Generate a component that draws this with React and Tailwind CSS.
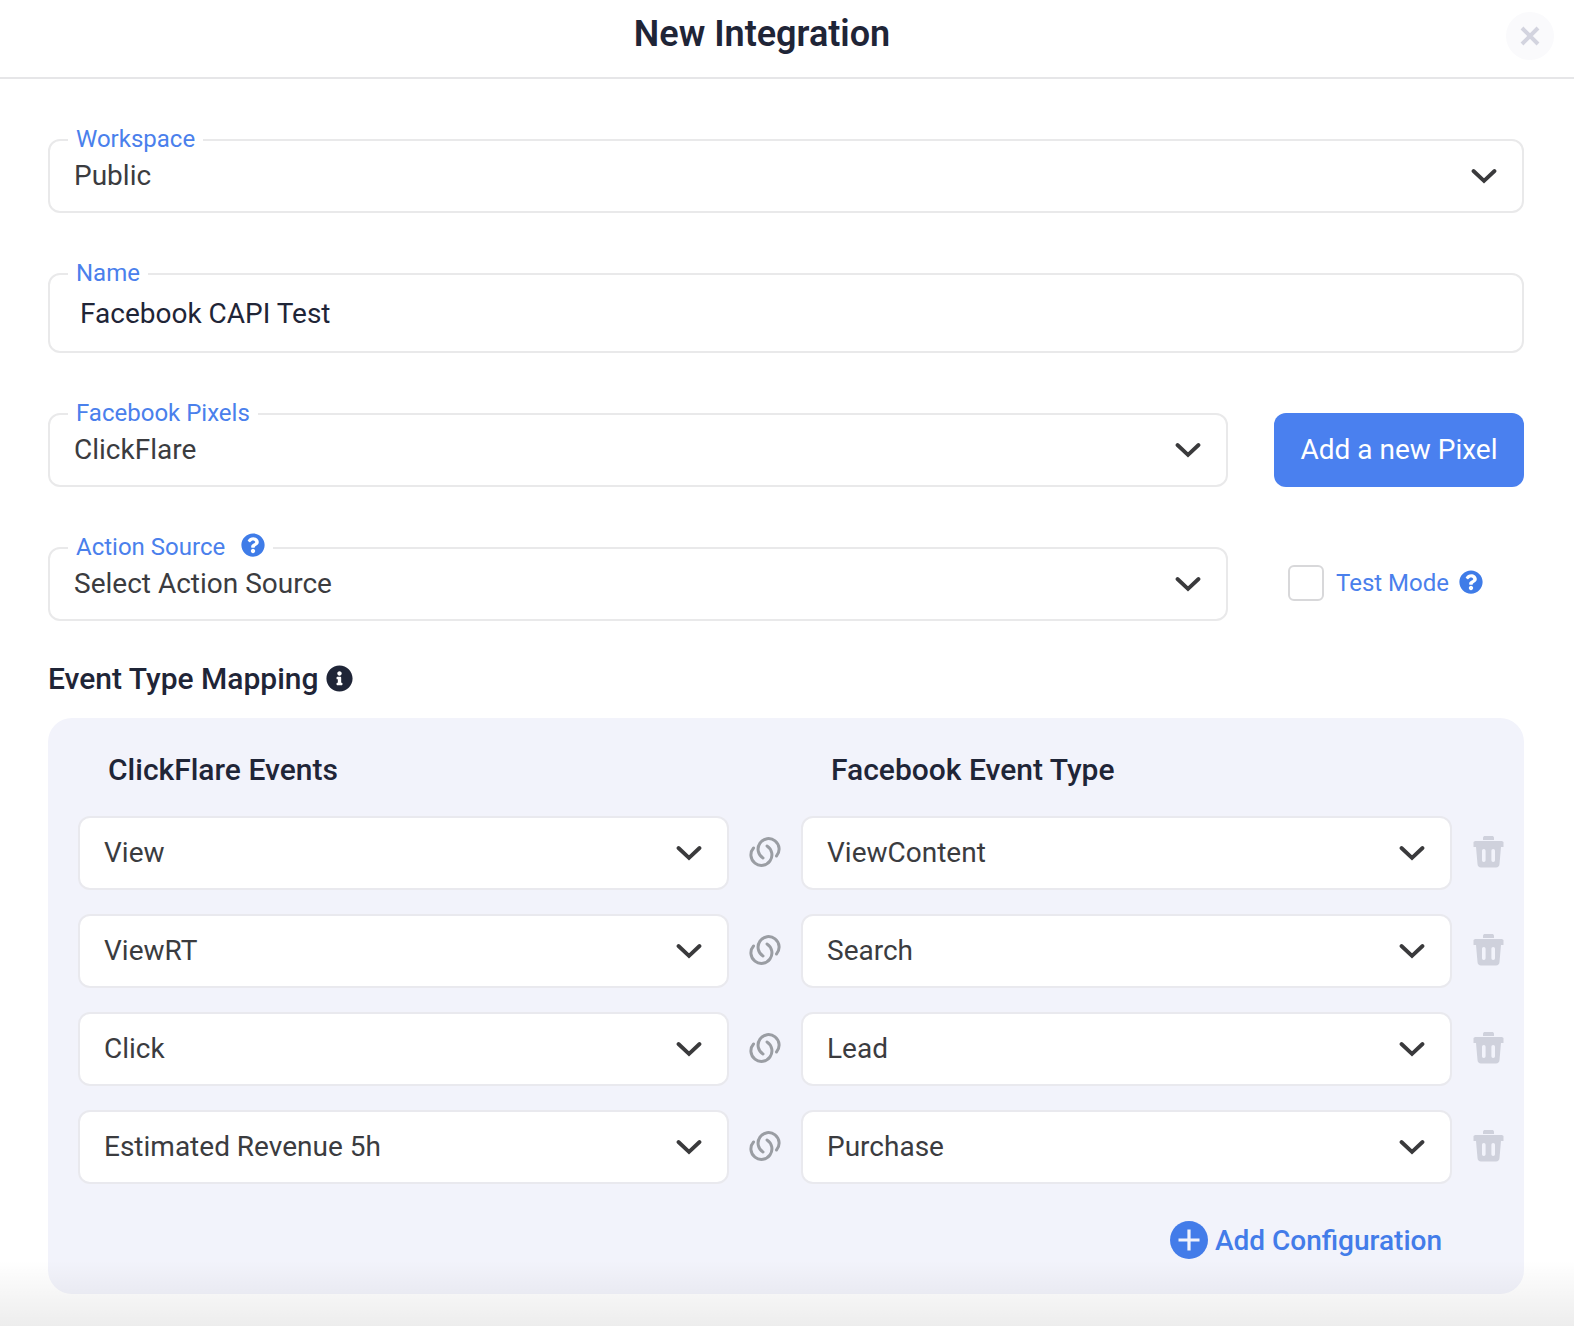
import React from "react";
import { FaInfoCircle, FaQuestionCircle } from "react-icons/fa";

const Chevron = () => (
  <svg width="26" height="16" viewBox="0 0 26 16" fill="none" className="shrink-0">
    <path d="M2.500 3 L13 13 L23.500 3" stroke="#3a3a3c" strokeWidth="3.800" strokeLinecap="round" strokeLinejoin="miter" />
  </svg>
);

const LinkRings = () => (
  <svg width="34" height="34" viewBox="0 0 34 34" fill="none">
    <path d="M15 23 A10.500 10.500 0 1 1 28.500 21" stroke="#9a9da3" strokeWidth="3" strokeLinecap="round" />
    <path d="M19 11 A10.500 10.500 0 1 1 5.500 13" stroke="#9a9da3" strokeWidth="3" strokeLinecap="round" />
  </svg>
);

const Trash = () => (
  <svg width="31" height="33" viewBox="0 0 31 33" fill="none">
    <path d="M10 5 V3 C10 1.500 11 1 12 1 H19 C20 1 21 1.500 21 3 V5 Z" fill="#cfd1dc" />
    <path d="M0.500 7 L2 6 H29 L30.500 7 V12 H0.500 Z" fill="#cfd1dc" />
    <path
      fillRule="evenodd"
      clipRule="evenodd"
      d="M3 12 H28 L26.500 29 C26.400 31 25 32.500 23 32.500 H8 C6 32.500 4.600 31 4.500 29 Z M10.800 14 C9.600 14 9 14.800 9 16 V25 C9 26.300 9.600 27 10.800 27 C12 27 12.600 26.300 12.600 25 V16 C12.600 14.800 12 14 10.800 14 Z M20.200 14 C19 14 18.400 14.800 18.400 16 V25 C18.400 26.300 19 27 20.200 27 C21.400 27 22 26.300 22 25 V16 C22 14.800 21.400 14 20.200 14 Z"
      fill="#cfd1dc"
    />
  </svg>
);

const Field = ({ label, children, className = "", height = "h-[74px]" }) => (
  <div className={`relative rounded-[12px] border-2 border-[#e9e9ea] bg-white ${height} ${className}`}>
    <div className="absolute left-[18px] top-[-17px] flex h-[30px] items-center gap-4 bg-white px-2 text-[24px] leading-[30px] text-[#4a80ec]">
      {label}
    </div>
    {children}
  </div>
);

const SelectBody = ({ value }) => (
  <div className="flex h-full items-center justify-between pb-[1px] pl-[24px] pr-[25px] text-[28px] text-[#3b3c3f]">
    <span>{value}</span>
    <Chevron />
  </div>
);

const MapSelect = ({ value }) => (
  <div className="flex h-[74px] items-center justify-between rounded-[12px] border-2 border-[#e9e9ee] bg-white pl-[24px] pr-[25px] text-[28px] text-[#3b3c3f]">
    <span>{value}</span>
    <Chevron />
  </div>
);

const rows = [
  ["View", "ViewContent"],
  ["ViewRT", "Search"],
  ["Click", "Lead"],
  ["Estimated Revenue 5h", "Purchase"],
];

export default function App() {
  return (
    <div className="relative h-[1326px] w-[1574px] overflow-hidden bg-white font-['Roboto',sans-serif]">
      <header className="relative flex h-[79px] items-center justify-center border-b-2 border-[#e6e6e8] pr-[50px]">
        <h1 className="mt-[-9px] text-[36px] font-semibold text-[#1f2537]">New Integration</h1>
        <button className="absolute right-[20px] top-[12px] flex h-[48px] w-[48px] items-center justify-center rounded-full bg-[#fafafc]">
          <svg width="20" height="20" viewBox="0 0 20 20" fill="none">
            <path d="M2 2 L18 18 M18 2 L2 18" stroke="#d3d4df" strokeWidth="4" />
          </svg>
        </button>
      </header>

      <main className="flex flex-col pl-[48px] pr-[50px] pt-[60px]">
        <Field label="Workspace">
          <SelectBody value="Public" />
        </Field>

        <Field label="Name" height="h-[80px]" className="mt-[60px]">
          <div className="flex h-full items-center pl-[30px] pt-[1px] text-[28px] text-[#1f2537]">Facebook CAPI Test</div>
        </Field>

        <div className="mt-[60px] flex gap-[46px]">
          <Field label="Facebook Pixels" className="w-[1180px]">
            <SelectBody value="ClickFlare" />
          </Field>
          <button className="h-[74px] w-[250px] rounded-[12px] bg-[#4a80ef] text-[28px] text-white">Add a new Pixel</button>
        </div>

        <div className="mt-[60px] flex gap-[46px]">
          <Field label={<>Action Source<FaQuestionCircle className="mt-[-4px] text-[24px] text-[#3f7ce8]" /></>} className="w-[1180px]">
            <SelectBody value="Select Action Source" />
          </Field>
          <label className="ml-[14px] flex items-center gap-3 pb-[3px] text-[24px] text-[#4a80ec]">
            <span className="h-[36px] w-[36px] rounded-[6px] border-2 border-[#d8d8da] bg-white" />
            <span>Test Mode</span>
            <FaQuestionCircle className="ml-[-2px] mt-[-2px] text-[24px] text-[#3f7ce8]" />
          </label>
        </div>

        <h2 className="mt-[38px] flex h-[38px] items-center gap-[7px] text-[30px] font-medium text-[#1f2537]">
          Event Type Mapping
          <FaInfoCircle className="text-[27px] text-[#1f2537]" />
        </h2>

        <section className="mt-[21px] h-[576px] rounded-[24px] bg-[#f2f3fb] px-[30px] pt-[33px]">
          <div className="grid grid-cols-[723px_1fr] pl-[30px] text-[30px] font-medium leading-[38px] text-[#1f2537]">
            <span>ClickFlare Events</span>
            <span>Facebook Event Type</span>
          </div>
          <div className="mt-[27px] flex flex-col gap-[24.100px]">
            {rows.map(([a, b]) => (
              <div key={a} className="grid grid-cols-[651px_72px_651px_73px] items-center">
                <MapSelect value={a} />
                <div className="mt-[-2px] flex justify-center"><LinkRings /></div>
                <MapSelect value={b} />
                <div className="mt-[-4px] flex justify-center"><Trash /></div>
              </div>
            ))}
          </div>
          <div className="mt-[36px] flex items-center justify-end gap-[7px] pr-[52px] text-[28px] font-medium text-[#437ce9]">
            <svg width="38" height="38" viewBox="0 0 38 38" className="mt-[-2px]">
              <circle cx="19" cy="19" r="19" fill="#437ce9" />
              <path d="M19 8.500 V29.500 M8.500 19 H29.500" stroke="#f2f3fb" strokeWidth="3.200" />
            </svg>
            <span>Add Configuration</span>
          </div>
        </section>
      </main>

      <div className="pointer-events-none absolute bottom-0 left-0 h-[66px] w-full bg-gradient-to-b from-transparent to-[#00000012]" />
    </div>
  );
}
